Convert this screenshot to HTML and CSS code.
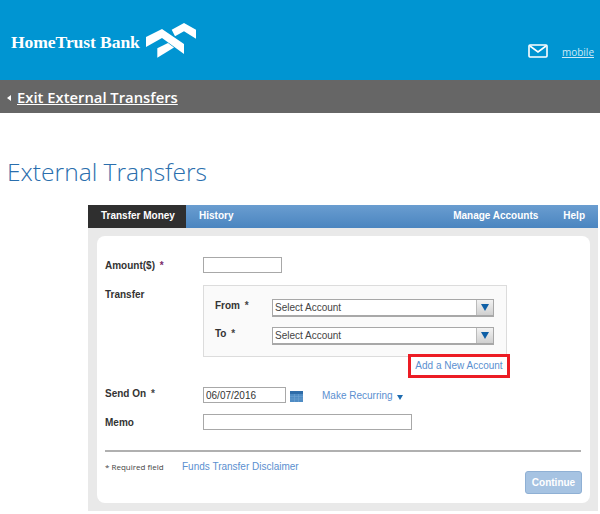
FILE: index.html
```html
<!DOCTYPE html>
<html lang="en">
<head>
<meta charset="utf-8">
<title>External Transfers</title>
<link rel="stylesheet" href="styles.css">
</head>
<body>
<header class="top">
  <div class="brand">
    <span class="brand-name">HomeTrust Bank</span>
    <svg class="logo" width="50" height="36" viewBox="0 0 50 36">
      <path class="logo-fill" d="M0 14 L16 6 L38 21 V31 L16 15 L0 24 Z"/>
      <path class="logo-fill" d="M11.3 34.7 V25.3 L22 20 L28 24.5 Z"/>
      <path class="logo-fill" d="M25.7 6.7 L38 0 L50 6.7 V15.7 L38 8.3 L29 13.3 Z"/>
    </svg>
  </div>
  <div class="top-links">
    <svg class="mail" width="20" height="14" viewBox="0 0 20 14">
      <rect class="mail-line" x="1" y="1" width="18" height="12" rx="1"/>
      <path class="mail-line" d="M2 2 L10 8 L18 2"/>
    </svg>
    <a class="mobile" href="#">mobile</a>
  </div>
</header>
<nav class="exit-bar">
  <span class="exit-arrow"></span>
  <a class="exit-link" href="#">Exit External Transfers</a>
</nav>
<h1 class="title">External Transfers</h1>
<main class="panel">
  <div class="tabs">
    <a class="tab tab-active" href="#">Transfer Money</a>
    <a class="tab" href="#">History</a>
    <span class="tab-space"></span>
    <a class="tab tab-manage" href="#">Manage Accounts</a>
    <a class="tab tab-help" href="#">Help</a>
  </div>
  <section class="card">
    <div class="row row-amount">
      <label class="label">Amount($) <span class="star">*</span></label>
      <input class="input input-amount" type="text">
    </div>
    <div class="row row-transfer">
      <label class="label label-transfer">Transfer</label>
      <div class="transfer-col">
        <div class="transfer-box">
          <div class="select-row">
            <label class="label label-small">From <span class="plain-star">*</span></label>
            <div class="select"><span class="select-text">Select Account</span><span class="select-btn"><span class="tri"></span></span></div>
          </div>
          <div class="select-row">
            <label class="label label-small">To <span class="plain-star">*</span></label>
            <div class="select"><span class="select-text">Select Account</span><span class="select-btn"><span class="tri"></span></span></div>
          </div>
        </div>
        <div class="add-wrap"><a class="add-link" href="#">Add a New Account</a></div>
      </div>
    </div>
    <div class="row row-send">
      <label class="label">Send On <span class="plain-star">*</span></label>
      <input class="input input-date" type="text" value="06/07/2016">
      <svg class="cal" width="13" height="11" viewBox="0 0 13 11">
        <rect class="cal-bg" width="13" height="11"/>
        <rect class="cal-top" width="13" height="3"/>
        <path class="cal-lines" d="M0 5.5H13M0 8H13M4.5 3V11M8.5 3V11"/>
      </svg>
      <a class="link recurring" href="#">Make Recurring</a>
      <span class="rec-tri"></span>
    </div>
    <div class="row row-memo">
      <label class="label">Memo</label>
      <input class="input input-memo" type="text">
    </div>
    <hr class="rule">
    <div class="foot">
      <span class="required">* Required field</span>
      <a class="link" href="#">Funds Transfer Disclaimer</a>
    </div>
    <div class="actions"><button class="continue" type="button">Continue</button></div>
  </section>
</main>
</body>
</html>
```
FILE: styles.css
```css
* { box-sizing: border-box; }
html, body { margin: 0; padding: 0; }
body { width: 600px; height: 514px; overflow: hidden; background: #fff; font-family: "Liberation Sans", Arial, sans-serif; }
a { color: inherit; }

.top { height: 80px; background: #0095d2; display: flex; justify-content: space-between; padding: 23px 6px 0 11px; }
.brand { display: flex; align-items: flex-start; height: 36px; }
.brand-name { font-family: "Liberation Serif", serif; font-weight: 700; font-size: 17.6px; line-height: 18px; margin-top: 10px; color: #fff; width: 135px; letter-spacing: -.1px; white-space: nowrap; }
.logo { display: block; }
.logo-fill { fill: #fff; }
.top-links { display: flex; align-items: center; height: 14px; margin-top: 21px; }
.mail { display: block; margin-right: 14px; }
.mail-line { fill: none; stroke: #fff; stroke-width: 1.6; }
.mobile { font-family: "Open Sans", sans-serif; font-size: 10px; color: #cfeaf6; padding-top: 2px; }

.exit-bar { height: 33px; background: #666; display: flex; align-items: center; padding-left: 7px; }
.exit-arrow { border-style: solid; border-width: 3px 4px 3px 0; border-color: transparent #fff transparent transparent; margin: 3px 6px 0 0; }
.exit-link { font-family: "Open Sans", sans-serif; font-weight: 600; font-size: 14.8px; color: #fff; }

.title { margin: 43px 0 0 7px; font-family: "Open Sans", sans-serif; font-weight: 300; font-size: 24.6px; line-height: 31px; color: #2a6ead; height: 49px; }

.panel { margin-left: 88px; width: 510px; height: 306px; background: #e9e9e9; }
.tabs { height: 23px; display: flex; align-items: stretch; background: linear-gradient(#6a9dd0, #4a85c0); color: #fff; font-size: 10px; font-weight: 700; line-height: 21px; }
.tab { text-decoration: none; padding: 0 13px; white-space: nowrap; color: #fff; }
.tab-active { width: 98px; background: #2f2f2f; }
.tab-space { flex: 1; }
.tab-manage { padding-right: 12px; }

.card { margin: 8px 8px 0 9px; height: 267px; background: #fff; border-radius: 8px; padding: 21px 9px 0 8px; }
.row { display: flex; align-items: flex-start; }
.label { width: 98px; flex: none; font-size: 10px; font-weight: 700; color: #333; line-height: 14px; white-space: nowrap; }
.star { color: #7a2a6a; margin-left: 2px; }
.plain-star { color: #444; margin-left: 2px; }
.input { display: block; height: 16px; border: 1px solid #a8a8a8; background: #fff; padding: 0 2px; font-family: inherit; font-size: 10px; color: #333; }
.input-amount { width: 79px; }
.row-amount .label { margin-top: 2px; }
.row-transfer { margin-top: 12px; }
.label-transfer { margin-top: 3px; }
.transfer-col { width: 307px; }
.transfer-box { width: 304px; height: 72px; background: #fafafa; border: 1px solid #dcdcdc; padding: 13px 0 0 11px; }
.select-row { display: flex; align-items: flex-start; height: 28px; }
.label-small { width: 57px; }
.select { width: 222px; height: 18px; display: flex; background: #fff; border: 1px solid #a8a8a8; border-bottom-width: 2px; }
.select-text { flex: 1; font-size: 10px; line-height: 15px; padding-left: 2px; color: #444; }
.select-btn { width: 17px; background: linear-gradient(#f2f2f2, #d0d0d0); border-left: 1px solid #bbb; display: flex; align-items: center; justify-content: center; }
.tri { border-style: solid; border-width: 7px 4px 0; border-color: #0e5fa6 transparent transparent; }
.add-wrap { display: flex; justify-content: flex-end; margin-top: -3px; }
.add-link { display: block; width: 102px; height: 24px; border: 3px solid #ec1c24; background: #fff; color: #5b8fd0; font-size: 10px; line-height: 17px; text-align: center; text-decoration: none; white-space: nowrap; }

.row-send { margin-top: 9px; height: 16px; }
.row-send .label { margin-top: 0; }
.input-date { width: 83px; height: 16px; }
.cal { display: block; margin: 4px 0 0 4px; flex: none; }
.cal-bg { fill: #4f8cc4; }
.cal-top { fill: #2f6ca8; }
.cal-lines { stroke: #6fa3d2; stroke-width: .6; fill: none; }
.link { color: #5b8fd0; font-size: 10px; text-decoration: none; }
.recurring { margin: 2px 0 0 19px; line-height: 14px; white-space: nowrap; }
.rec-tri { border-style: solid; border-width: 5px 3px 0; border-color: #1e6cb0 transparent transparent; margin: 8px 0 0 4px; }

.row-memo { margin-top: 11px; }
.row-memo .label { margin-top: 2px; }
.input-memo { width: 209px; }

.rule { margin: 20px 0 0; border: 0; height: 2px; background: #b0b0b0; width: 476px; }
.foot { display: flex; align-items: baseline; margin-top: 9px; height: 14px; }
.required { width: 77px; font-family: "Open Sans", sans-serif; font-size: 8px; color: #444; white-space: nowrap; }
.actions { display: flex; justify-content: flex-end; width: 477px; margin-top: -4px; }
.continue { width: 57px; height: 23px; background: #a6c3e2; border: 1px solid #8fb0d4; border-radius: 3px; color: #fff; font-family: inherit; font-size: 10px; font-weight: 700; padding: 0; }
```
